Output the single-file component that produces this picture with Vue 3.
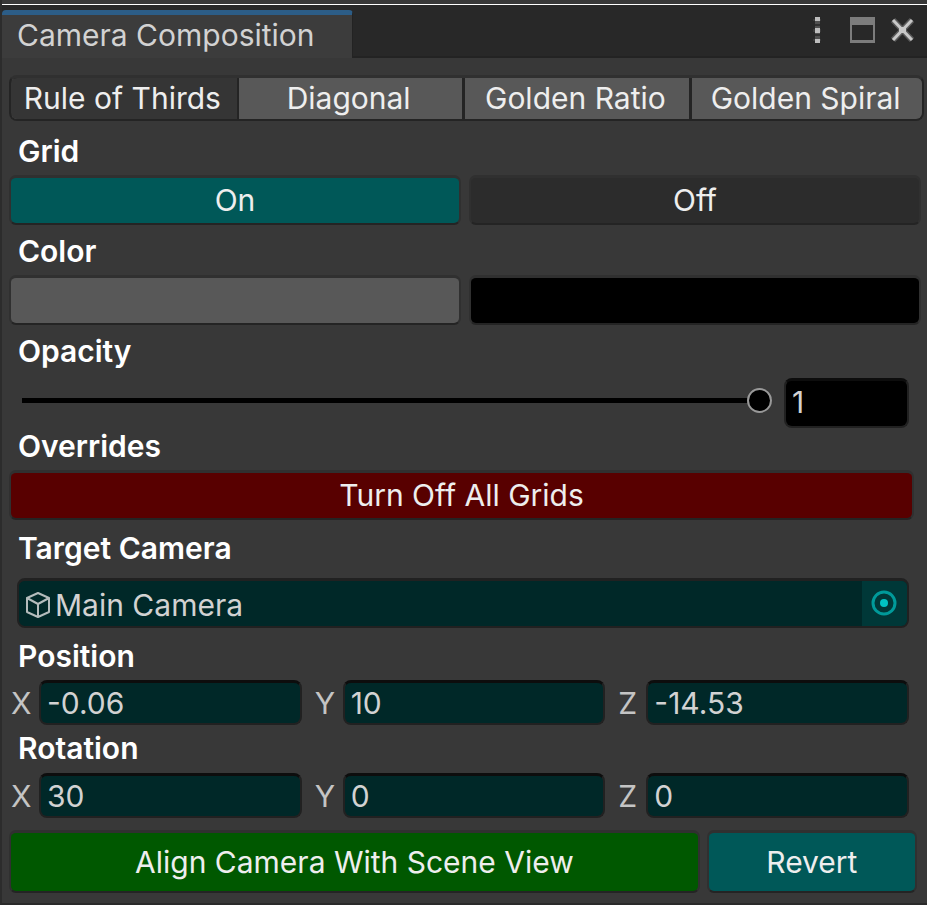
<script setup>
import { ref } from 'vue'

const modes = ['Rule of Thirds', 'Diagonal', 'Golden Ratio', 'Golden Spiral']
const mode = ref('Rule of Thirds')
const opacity = ref(1)
const target = ref('Main Camera')
const vectors = ref([
  { name: 'Position', axes: { X: '-0.06', Y: '10', Z: '-14.53' } },
  { name: 'Rotation', axes: { X: '30', Y: '0', Z: '0' } },
])
</script>

<template>
  <div class="window">
    <header class="titlebar">
      <h1 class="tab">Camera Composition</h1>
      <div class="window-tools">
        <button class="tool" aria-label="Menu">
          <svg width="10" height="28" viewBox="0 0 10 28" shape-rendering="crispEdges">
            <path d="M0 3h8v2H0zM0 13h8v3H0zM0 23h8v2H0z" fill="#3a3a3a" />
            <path d="M2 5h5v18H2z" fill="#505050" />
            <path d="M2 8h5v2H2zM2 18h5v2H2z" fill="#303030" />
            <path d="M2 1h5v4H2zM2 12h5v5H2zM2 23h5v4H2z" fill="#bdbdbd" />
          </svg>
        </button>
        <button class="tool" aria-label="Maximize">
          <svg width="26" height="28" viewBox="0 0 26 28" shape-rendering="crispEdges">
            <path d="M0 1h25v26H0zM2 9v15h21V9z" fill="#7c7c7c" fill-rule="evenodd" />
          </svg>
        </button>
        <button class="tool" aria-label="Close">
          <svg width="26" height="28" viewBox="0 0 26 28">
            <path d="M2 4l19 20M21 4L2 24" stroke="#5a5a5a" stroke-width="6" />
            <path d="M2 4l19 20M21 4L2 24" stroke="#c8c8c8" stroke-width="3" />
            <path d="M8 11h7v6H8z" fill="#c8c8c8" />
          </svg>
        </button>
      </div>
    </header>

    <main class="panel">
      <div class="toolbar">
        <button
          v-for="m in modes"
          :key="m"
          class="segment"
          :class="{ active: m === mode }"
          @click="mode = m"
        >{{ m }}</button>
      </div>

      <section class="group first">
        <h2>Grid</h2>
        <div class="pair">
          <button class="btn teal">On</button>
          <button class="btn dark">Off</button>
        </div>
      </section>

      <section class="group">
        <h2>Color</h2>
        <div class="pair">
          <button class="btn grey" aria-label="Light grid color"></button>
          <button class="btn black" aria-label="Dark grid color"></button>
        </div>
      </section>

      <section class="group">
        <h2><label for="opacity">Opacity</label></h2>
        <div class="slider-row">
          <input id="opacity" v-model="opacity" class="slider" type="range" min="0" max="1" step="0.01">
          <input v-model="opacity" class="field number" type="text" aria-label="Opacity value">
        </div>
      </section>

      <section class="group tight">
        <h2>Overrides</h2>
        <button class="btn red wide">Turn Off All Grids</button>
      </section>

      <section class="group spaced">
        <h2><label for="target">Target Camera</label></h2>
        <div class="object-field">
          <svg class="cube" width="26" height="28" viewBox="0 0 26 28" fill="none" stroke="#b4bcbc" stroke-width="2" stroke-linejoin="round">
            <path d="M13 2L24 7V21L13 26L2 21V7Z" />
            <path d="M2 7L13 13L24 7M13 13V26" />
          </svg>
          <input id="target" v-model="target" class="object-name" type="text">
          <button class="picker" aria-label="Pick camera">
            <svg width="26" height="26" viewBox="0 0 26 26">
              <circle cx="13" cy="13" r="11" fill="none" stroke="#009a9a" stroke-width="3" />
              <circle cx="13" cy="13" r="4" fill="#00c4c4" />
            </svg>
          </button>
        </div>
      </section>

      <section v-for="v in vectors" :key="v.name" class="group vector">
        <h2>{{ v.name }}</h2>
        <div class="axes">
          <label v-for="(value, axis) in v.axes" :key="axis" class="axis">
            <span class="axis-name">{{ axis }}</span>
            <input v-model="v.axes[axis]" class="field" type="text">
          </label>
        </div>
      </section>

      <div class="actions">
        <button class="btn green">Align Camera With Scene View</button>
        <button class="btn teal">Revert</button>
      </div>
    </main>
  </div>
</template>

<style>
body {
  margin: 0;
  background: #383838;
}
</style>

<style scoped>
* {
  box-sizing: border-box;
}

.window {
  display: flex;
  flex-direction: column;
  min-height: 100vh;
  border-left: 2px solid #2c2c2c;
  border-bottom: 2px solid #2a2a2a;
  background: #383838;
  color: #eee;
  font: 400 30px/36px Inter, sans-serif;
  font-optical-sizing: none;
}

button,
input {
  margin: 0;
  padding: 0;
  border: 0;
  background: none;
  color: inherit;
  font: inherit;
  font-optical-sizing: none;
}

button {
  cursor: pointer;
}

h1,
h2 {
  margin: 0;
  font-size: 30px;
  line-height: 36px;
}

.titlebar {
  display: flex;
  justify-content: space-between;
  margin-top: 4px;
  height: 54px;
  border-top: 1px solid #fff;
  background: #282828;
  box-shadow: inset 0 -2px #232323;
}

.tab {
  align-self: flex-end;
  width: 351px;
  height: 48px;
  padding: 2px 15px 0;
  border-top: 5px solid #2c5d87;
  border-right: 1px solid #232323;
  border-radius: 4px 4px 0 0;
  background: #3c3c3c;
  color: #d2d2d2;
  font-weight: 400;
}

.window-tools {
  display: flex;
  align-items: flex-start;
  gap: 15px;
  padding: 11px 10px 0 0;
}

.tool {
  display: flex;
}

.tool:first-child {
  margin-right: 12px;
}

.panel {
  padding: 17px 3px 10px 7px;
}

.toolbar {
  display: grid;
  grid-template-columns: 228fr 226fr 228fr 230fr;
  height: 46px;
  border: 2px solid #242424;
  border-top: 3px solid #303030;
  border-radius: 8px;
  overflow: hidden;
  background: #585858;
}

.segment {
  padding: 0 3px 2px 0;
  border-right: 3px solid #242424;
  white-space: nowrap;
}

.segment:last-child {
  border-right: 0;
}

.segment.active {
  border-right-width: 2px;
  background: #353535;
  box-shadow: 0 -3px #0d0d0d;
}

.group {
  margin-top: 9px;
}

.group.first {
  margin-top: 12px;
}

.group.tight {
  margin-top: 0;
}

.group.spaced {
  margin-top: 10px;
}

.group.vector {
  margin-top: 5px;
}

.group.vector h2 {
  margin-bottom: 7px;
}

.group.spaced + .vector {
  margin-top: 10px;
}

.group.spaced + .vector h2 {
  margin-bottom: 6px;
}

h2 {
  padding-left: 9px;
  margin-bottom: 6px;
  color: #fff;
  font-weight: 600;
}

.pair {
  display: grid;
  grid-template-columns: 1fr 1fr;
  gap: 8px;
  margin-right: 3px;
}

.group:has(.pair) + .group {
  margin-top: 8px;
}

.btn {
  height: 50px;
  padding-bottom: 2px;
  border: 2px solid #303030;
  border-top-width: 3px;
  border-bottom-color: #242424;
  border-radius: 7px;
}

.teal { background: #005858; }
.dark { background: #2c2c2c; }
.grey { background: #585858; }
.black { background: #000; }
.red { background: #580000; }
.green { background: #005800; }

.wide {
  display: block;
  width: calc(100% - 10px);
}

.slider-row {
  display: flex;
  align-items: flex-start;
  gap: 12px;
  margin-right: 15px;
  padding: 3px 0 0 13px;
}

.slider {
  flex: 1;
  min-width: 0;
  height: 45px;
  appearance: none;
}

.slider::-webkit-slider-runnable-track {
  height: 5px;
  background: #000;
}

.slider::-webkit-slider-thumb {
  appearance: none;
  width: 25px;
  height: 25px;
  margin-top: -10px;
  border: 2px solid #999;
  border-radius: 50%;
  background: #000;
  box-shadow: none;
}

.field {
  flex: 1;
  min-width: 0;
  height: 45px;
  padding-left: 6px;
  border: 2px solid #212121;
  border-top: 3px solid #0d0d0d;
  border-radius: 8px;
  background: #002828;
  color: #d2d2d2;
}

.number {
  flex: none;
  width: 125px;
  height: 50px;
  padding-bottom: 4px;
  background: #000;
}

.object-field {
  display: flex;
  align-items: center;
  height: 50px;
  margin: 12px 15px 0 8px;
  border: 2px solid #212121;
  border-top-width: 3px;
  border-radius: 8px;
  overflow: hidden;
  background: #002828;
  color: #d2d2d2;
}

.group.spaced h2 {
  margin-bottom: 12px;
}

.group.spaced .object-field {
  margin-top: 0;
}

.cube {
  flex: none;
  margin: 3px 4px 0 6px;
}

.object-name {
  flex: 1;
  min-width: 0;
  height: 42px;
  padding-top: 2px;
}

.picker {
  display: flex;
  align-items: center;
  justify-content: center;
  width: 45px;
  height: 100%;
  padding: 0 2px 2px 0;
  background: #003838;
}

.axes {
  display: grid;
  grid-template-columns: repeat(3, minmax(0, 1fr));
  gap: 13px;
  margin-right: 15px;
  padding-left: 2px;
}

.axis {
  display: flex;
  align-items: center;
}

.axis-name {
  width: 28px;
  color: #c4c4c4;
}

.actions {
  display: grid;
  grid-template-columns: 690fr 210fr;
  gap: 7px;
  margin: 12px 7px 0 0;
}

.actions .btn {
  height: 63px;
  padding-bottom: 0;
}
</style>
